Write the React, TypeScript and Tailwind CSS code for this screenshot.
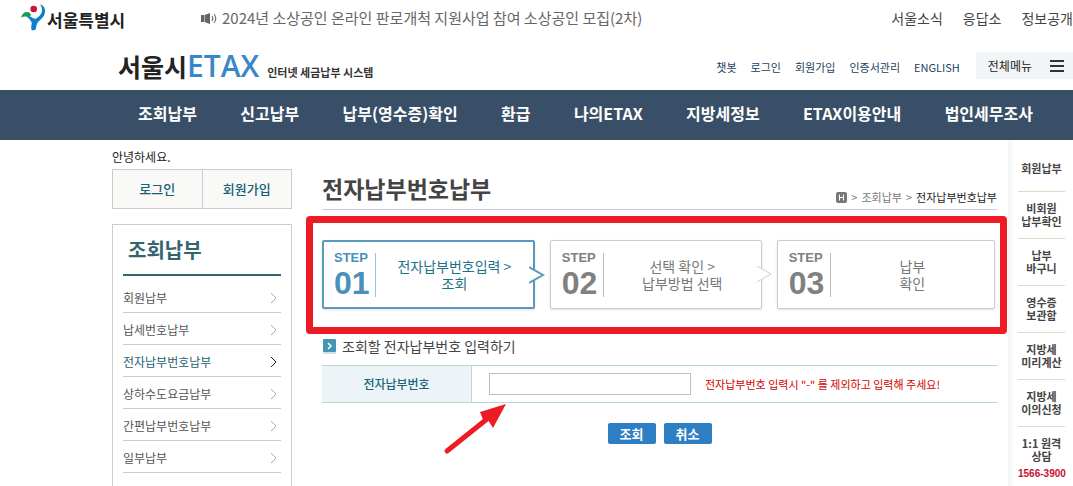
import { useState } from "react";
import clsx from "clsx";

const topLinks = ["서울소식", "응답소", "정보공개"];
const utilLinks = ["챗봇", "로그인", "회원가입", "인증서관리", "ENGLISH"];
const navItems = [
  "조회납부",
  "신고납부",
  "납부(영수증)확인",
  "환급",
  "나의ETAX",
  "지방세정보",
  "ETAX이용안내",
  "법인세무조사",
];
const sideMenu = [
  "회원납부",
  "납세번호납부",
  "전자납부번호납부",
  "상하수도요금납부",
  "간편납부번호납부",
  "일부납부",
];
const steps = [
  { no: "01", lines: ["전자납부번호입력 >", "조회"] },
  { no: "02", lines: ["선택 확인 >", "납부방법 선택"] },
  { no: "03", lines: ["납부", "확인"] },
];
const quickLinks = [
  ["회원납부"],
  ["비회원", "납부확인"],
  ["납부", "바구니"],
  ["영수증", "보관함"],
  ["지방세", "미리계산"],
  ["지방세", "이의신청"],
];

function SeoulMark() {
  return (
    <svg width="26" height="28" viewBox="0 0 26 28" aria-hidden="true">
      <path d="M0 13.500C1 10 3 8 6 8c2 0 3.500 1 4 3l-2 2.500c-3-1.500-5-1.500-8 0z" fill="#1f9a48" />
      <circle cx="12.700" cy="5" r="3.300" fill="#c8143c" />
      <path
        d="M10.500 25.500c-1-5 1-8 4-10.500 4-3 6.500-5 6.500-9 0-2-.5-3.500-2-5.500 4 1 5.500 4 5 8-.6 4-3.500 6.500-6.500 9-2 2-2.200 4-2.500 7-.6 2-4 2.500-4.500 1z"
        fill="#0b7fc9"
      />
      <path d="M6 13c2-.8 3.500-.5 5 .5 1.500 1 2.500 1.500 4 1l-4 5c-1-3-2.500-5-5-6.500z" fill="#0b7fc9" />
    </svg>
  );
}

function SpeakerIcon() {
  return (
    <svg width="17" height="13" viewBox="0 0 17 13" aria-hidden="true">
      <path d="M0 3h3v7H0zM3.500 3L9 1v11L3.500 10z" fill="#666" />
      <path d="M11 4q1.500 2.500 0 5M13 2q3.500 4.500 0 9" fill="none" stroke="#777" strokeWidth="1.200" />
    </svg>
  );
}

function Header() {
  return (
    <header>
      <div className="flex h-9 items-center overflow-hidden">
        <a href="#" className="flex w-[181px] shrink-0 items-center pl-[21px]">
          <SeoulMark />
          <span className="pt-1 text-[17px] leading-5 font-bold text-[#222]">서울특별시</span>
        </a>
        <a href="#" className="flex flex-1 items-center gap-1 pl-5 text-[15px] text-[#666]">
          <SpeakerIcon />
          2024년 소상공인 온라인 판로개척 지원사업 참여 소상공인 모집(2차)
        </a>
        <nav className="flex gap-5 text-[14px] text-[#444]">
          {topLinks.map((link) => (
            <a key={link} href="#">{link}</a>
          ))}
        </nav>
      </div>

      <div className="flex h-[54px] pl-[118px]">
        <h1 className="flex flex-1 items-center">
          <a href="#" className="flex items-baseline pt-3 leading-8">
            <span className="text-[25px] font-bold text-[#222]">서울시</span>
            <span className="font-['Open_Sans',sans-serif] text-[30px] font-semibold text-[#3a87c8]">ETAX</span>
            <span className="pl-2 text-[11px] font-bold text-[#333]">인터넷 세금납부 시스템</span>
          </a>
        </h1>
        <nav className="flex h-[62px] items-center gap-[14px] pr-4 text-[11px] text-[#24415f]">
          {utilLinks.map((link) => (
            <a key={link} href="#">{link}</a>
          ))}
        </nav>
        <button className="mt-4 flex h-[27px] items-center gap-[18px] bg-[#f2f5f7] pl-3 pr-[9px] text-[12px] text-[#222]">
          전체메뉴
          <svg width="14" height="12" viewBox="0 0 14 12" aria-hidden="true">
            <path d="M0 1h14M0 6h14M0 11h14" stroke="#333" strokeWidth="2" />
          </svg>
        </button>
      </div>

      <nav className="flex h-[50px] items-center justify-between bg-[#394e67] pb-1 pl-[138px] pr-10 text-[16px] font-bold text-white">
        {navItems.map((item) => (
          <a key={item} href="#">{item}</a>
        ))}
      </nav>
    </header>
  );
}

function Sidebar() {
  return (
    <aside className="flex w-[180px] shrink-0 flex-col pt-[6px]">
      <p className="h-[23px] text-[12px] leading-[21px] text-[#222]">안녕하세요.</p>
      <div className="flex h-10 border border-[#ccc] bg-[#f9f9f8] text-[13px] font-medium text-[#156074]">
        <button className="flex-1 border-r border-[#ccc]">로그인</button>
        <button className="flex-1">회원가입</button>
      </div>
      <div className="mt-[15px] flex-1 border border-b-0 border-[#ccc] px-[10px]">
        <h2 className="mb-[5px] h-[51px] border-b-2 border-[#34656f] pl-[5px] text-[20px] leading-[50px] font-bold text-[#34656f]">
          조회납부
        </h2>
        <ul>
          {sideMenu.map((item) => {
            const active = item === "전자납부번호납부";
            return (
              <li key={item} className="border-b border-[#ccc]">
                <a
                  href="#"
                  className={clsx(
                    "flex h-[31px] items-center justify-between pr-1 pt-[2px] text-[12px]",
                    active ? "text-[#1d5f70]" : "text-[#555]"
                  )}
                >
                  {item}
                  <svg width="7" height="12" viewBox="0 0 7 12" aria-hidden="true">
                    <path d="M1 1l5 5-5 5" fill="none" stroke={active ? "#222" : "#aaa"} />
                  </svg>
                </a>
              </li>
            );
          })}
        </ul>
      </div>
    </aside>
  );
}

function Steps() {
  return (
    <div className="relative mt-[30px]">
      <ol className="flex gap-[15px] pr-[2px]">
        {steps.map((step, i) => {
          const active = i === 0;
          return (
            <li
              key={step.no}
              className={clsx(
                "relative flex h-[69px] items-center rounded-xs bg-white shadow-sm",
                i < 2 ? "flex-[212]" : "flex-[219]",
                active ? "border-2 border-[#5a9abf] pl-[10px]" : "border border-[#ccc] pl-[11px]"
              )}
            >
              <div
                className={clsx(
                  "flex w-[41px] flex-col pt-[2px] font-['Liberation_Sans',sans-serif] font-bold",
                  active ? "text-[#4a90ba]" : "text-[#808080]"
                )}
              >
                <span className="text-[13px] leading-[15px]">STEP</span>
                <span className="text-[32px] leading-9">{step.no}</span>
              </div>
              <div className={clsx("h-11 w-px", active ? "bg-[#9cc3da]" : "bg-[#bbb]")} />
              <p
                className={clsx(
                  "flex-1 text-center text-[14px] leading-[17px]",
                  active ? "text-[#1b7388]" : "text-[#777]"
                )}
              >
                {step.lines[0]}
                <br />
                {step.lines[1]}
              </p>
              {i < 2 && (
                <svg
                  className="absolute -right-3 top-6"
                  width="16"
                  height="18"
                  viewBox="0 0 16 18"
                  aria-hidden="true"
                >
                  <path d="M0 1L14 9L0 17z" fill="#fff" />
                  <path
                    d="M0 1L14 9L0 17"
                    fill="none"
                    stroke={active ? "#5a9abf" : "#ccc"}
                    strokeWidth={active ? 2 : 1}
                  />
                </svg>
              )}
            </li>
          );
        })}
      </ol>
      {/* red highlight around the steps */}
      <div className="pointer-events-none absolute -left-4 -right-[10px] -bottom-[25px] -top-6 rounded-sm border-[7px] border-[#ed1c24]" />
    </div>
  );
}

function PaymentForm() {
  const [payNo, setPayNo] = useState("");

  return (
    <form onSubmit={(e) => e.preventDefault()}>
      <h3 className="mt-[26px] flex h-[22px] items-center gap-[6px] text-[14px] text-[#444]">
        <svg width="14" height="15" viewBox="0 0 14 15" aria-hidden="true">
          <rect x="1" y="1" width="13" height="14" rx="1" fill="#d5dde2" />
          <rect x="1" width="13" height="13" rx="1" fill="#4595b5" />
          <path d="M6 4l3 3-3 3" fill="none" stroke="#fff" strokeWidth="1.500" />
        </svg>
        조회할 전자납부번호 입력하기
      </h3>
      <div className="relative mt-2 flex h-[38px] border-y border-[#b9d5d8]">
        <label
          htmlFor="payNo"
          className="flex w-[150px] items-center justify-center border-r border-[#b9d5d8] bg-[#edf4f8] text-[12px] font-medium text-[#17647a]"
        >
          전자납부번호
        </label>
        <div className="flex flex-1 items-center gap-[14px] pl-[17px]">
          <input
            id="payNo"
            type="text"
            value={payNo}
            onChange={(e) => setPayNo(e.target.value)}
            className="h-[22px] w-[202px] border border-[#b5c3c4] bg-white px-1 text-[12px] outline-none"
          />
          <span className="text-[11px] text-[#d40000]">
            전자납부번호 입력시 "-" 를 제외하고 입력해 주세요!
          </span>
        </div>
        {/* arrow pointing at the input */}
        <svg
          className="pointer-events-none absolute left-[121px] top-[37px]"
          width="66"
          height="54"
          viewBox="0 0 66 54"
          aria-hidden="true"
        >
          <path d="M4 48L44 16" stroke="#ed1c24" strokeWidth="5" strokeLinecap="round" />
          <path d="M63 1L50 25L45 17L41 19L37 9z" fill="#ed1c24" />
        </svg>
      </div>
      <div className="mt-5 flex justify-center gap-2 text-[13px] leading-[21px] font-bold text-white">
        <button type="submit" className="w-12 rounded-xs bg-[#2e7ec3]">조회</button>
        <button type="button" onClick={() => setPayNo("")} className="w-12 rounded-xs bg-[#2e7ec3]">
          취소
        </button>
      </div>
    </form>
  );
}

function QuickRail() {
  return (
    <aside className="ml-[11px] w-[65px] shrink-0 bg-linear-to-r from-[#f5f5f5] to-white to-10% pl-[10px] pr-2 pt-[5px] text-center text-[11px] leading-[13px] font-bold text-[#444]">
      {quickLinks.map((lines) => (
        <a
          key={lines.join("")}
          href="#"
          className="flex h-[47px] flex-col justify-center border-b border-[#dcdcc4]"
        >
          {lines.map((line) => (
            <span key={line}>{line}</span>
          ))}
        </a>
      ))}
      <a href="#" className="flex flex-col pt-[10px]">
        <span>1:1 원격</span>
        <span>상담</span>
        <span className="pt-1 font-['Liberation_Sans',sans-serif] text-[10px] whitespace-nowrap text-[#c8102e]">
          1566-3900
        </span>
      </a>
    </aside>
  );
}

export default function App() {
  return (
    <div className="flex min-h-screen flex-col bg-white font-['Noto_Sans_CJK_KR',sans-serif]">
      <Header />
      <div className="flex flex-1 pl-28">
        <Sidebar />
        <main className="min-w-0 flex-1 pl-[30px]">
          <div className="flex h-[70px] items-end justify-between border-b border-[#ccc]">
            <h2 className="pb-[5px] text-[23px] leading-8 font-bold text-[#444]">전자납부번호납부</h2>
            <div className="flex items-center gap-1 pb-1 text-[11px] leading-4 text-[#777]">
              <a href="#" aria-label="홈">
                <svg width="11" height="11" viewBox="0 0 11 11" aria-hidden="true">
                  <rect width="11" height="11" rx="2" fill="#777" />
                  <path d="M3.500 2.500v6M7.500 2.500v6M3.500 5.500h4" stroke="#fff" />
                </svg>
              </a>
              <span>&gt;</span>
              <a href="#">조회납부</a>
              <span>&gt;</span>
              <span className="text-[#222]">전자납부번호납부</span>
            </div>
          </div>
          <Steps />
          <PaymentForm />
        </main>
        <QuickRail />
      </div>
    </div>
  );
}
